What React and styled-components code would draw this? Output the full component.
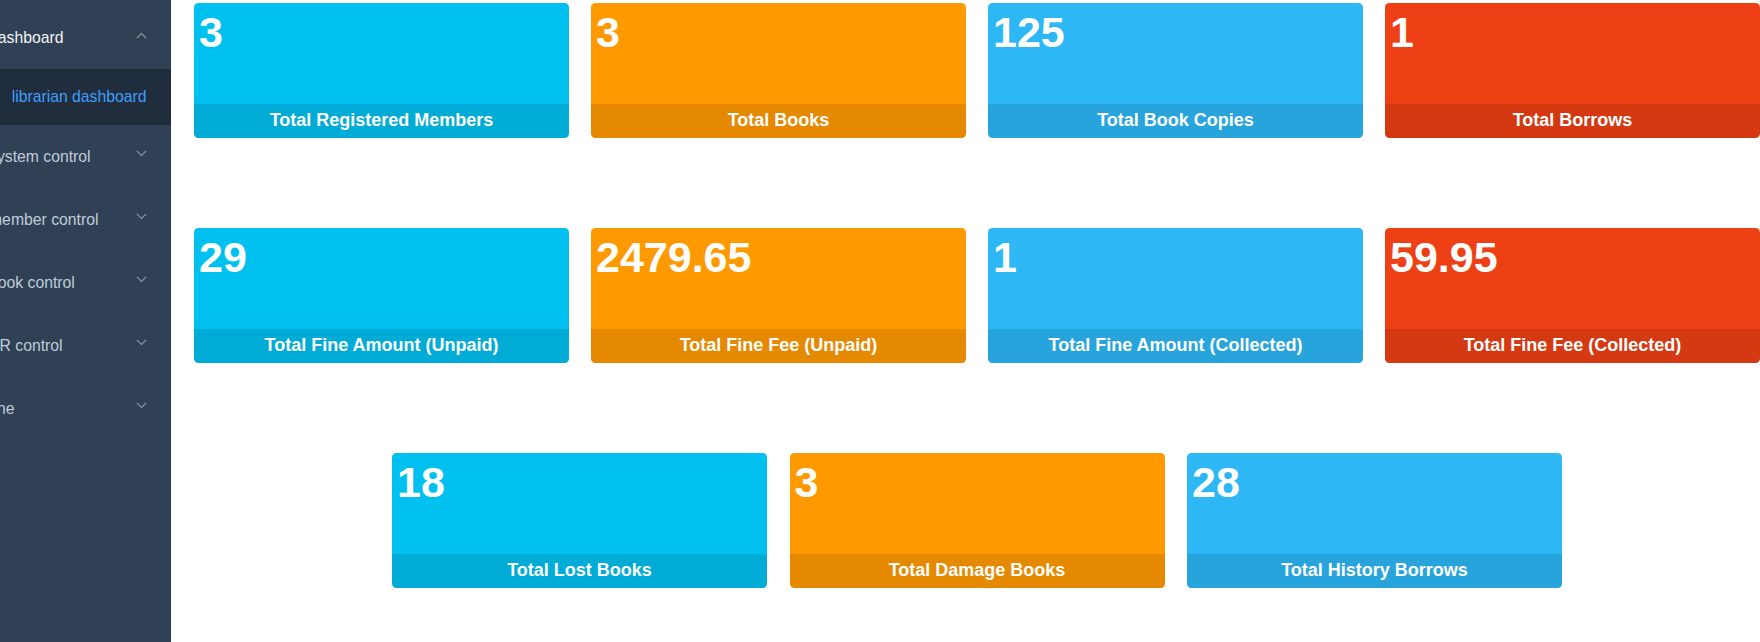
import React from "react";
import styled, { createGlobalStyle } from "styled-components";

const GlobalStyle = createGlobalStyle`
  html, body { margin: 0; padding: 0; background: #fff; }
  body { font-family: "Liberation Sans", Arial, Helvetica, sans-serif; }
  * { box-sizing: border-box; }
`;

const Layout = styled.div`
  display: flex;
  width: 100%;
  min-height: 100vh;
`;

const Sidebar = styled.aside`
  flex: 0 0 171px;
  width: 171px;
  background: #304156;
  overflow: hidden;
  min-height: 100vh;
`;

const Menu = styled.nav`
  display: flex;
  flex-direction: column;
  padding-top: 6px;
  margin-left: -11px;
  width: 182px;
`;

const MenuTitle = styled.div`
  height: 63px;
  display: flex;
  align-items: center;
  justify-content: space-between;
  padding-right: 24px;
  font-size: 15.75px;
  color: ${(p) => (p.$active ? "#f4f4f5" : "#bfcbd9")};
  white-space: nowrap;
`;

const SubItem = styled.div`
  height: 56px;
  display: flex;
  align-items: center;
  padding-left: 22.7px;
  background: #1f2d3d;
  font-size: 15.75px;
  color: ${(p) => (p.$active ? "#409eff" : "#bfcbd9")};
  white-space: nowrap;
`;

const Arrow = styled.svg`
  width: 11px;
  height: 7px;
  flex: 0 0 auto;
  margin-top: ${(p) => (p.$up ? "-5px" : "-7px")};
`;

const Main = styled.main`
  flex: 1 1 auto;
  padding: 3px 0 0 23px;
  display: flex;
  flex-direction: column;
  gap: 90px;
`;

const Grid = styled.div`
  display: grid;
  grid-template-columns: repeat(4, 375px);
  column-gap: 22px;
`;

const CenterRow = styled.div`
  display: flex;
  justify-content: center;
  gap: 22.5px;
`;

const Card = styled.div`
  width: 375px;
  height: 135px;
  border-radius: 4.5px;
  overflow: hidden;
  background: ${(p) => p.$color};
  color: #fff;
  display: flex;
  flex-direction: column;
`;

const Value = styled.div`
  flex: 1 1 auto;
  padding: 5px 5px 0;
  font-size: 43px;
  font-weight: 700;
  line-height: normal;
`;

const Label = styled.div`
  height: 34px;
  line-height: 32px;
  background: rgba(0, 0, 0, 0.1);
  text-align: center;
  font-size: 18px;
  font-weight: 700;
  white-space: nowrap;
`;

const COLORS = {
  aqua: "#00c0ef",
  orange: "#ff9900",
  blue: "#2db7f5",
  red: "#ed4014",
};

const row1 = [
  { v: "3", l: "Total Registered Members", c: "aqua" },
  { v: "3", l: "Total Books", c: "orange" },
  { v: "125", l: "Total Book Copies", c: "blue" },
  { v: "1", l: "Total Borrows", c: "red" },
];
const row2 = [
  { v: "29", l: "Total Fine Amount (Unpaid)", c: "aqua" },
  { v: "2479.65", l: "Total Fine Fee (Unpaid)", c: "orange" },
  { v: "1", l: "Total Fine Amount (Collected)", c: "blue" },
  { v: "59.95", l: "Total Fine Fee (Collected)", c: "red" },
];
const row3 = [
  { v: "18", l: "Total Lost Books", c: "aqua" },
  { v: "3", l: "Total Damage Books", c: "orange" },
  { v: "28", l: "Total History Borrows", c: "blue" },
];

function Chevron({ up }) {
  return (
    <Arrow $up={up} viewBox="0 0 11 7">
      <path
        d={up ? "M0.8 6.2 L5.5 1.5 L10.2 6.2" : "M0.8 0.8 L5.5 5.5 L10.2 0.8"}
        fill="none"
        stroke="#909399"
        strokeWidth="1.2"
      />
    </Arrow>
  );
}

function StatCard({ v, l, c }) {
  return (
    <Card $color={COLORS[c]}>
      <Value>{v}</Value>
      <Label>{l}</Label>
    </Card>
  );
}

const menus = ["system control", "member control", "book control", "BR control", "fine"];

export default function App() {
  return (
    <>
      <GlobalStyle />
      <Layout>
        <Sidebar>
          <Menu>
            <MenuTitle $active>
              <span>dashboard</span>
              <Chevron up />
            </MenuTitle>
            <SubItem $active>librarian dashboard</SubItem>
            {menus.map((m) => (
              <MenuTitle key={m}>
                <span>{m}</span>
                <Chevron />
              </MenuTitle>
            ))}
          </Menu>
        </Sidebar>
        <Main>
          <Grid>
            {row1.map((d) => (
              <StatCard key={d.l} {...d} />
            ))}
          </Grid>
          <Grid>
            {row2.map((d) => (
              <StatCard key={d.l} {...d} />
            ))}
          </Grid>
          <CenterRow>
            {row3.map((d) => (
              <StatCard key={d.l} {...d} />
            ))}
          </CenterRow>
        </Main>
      </Layout>
    </>
  );
}
